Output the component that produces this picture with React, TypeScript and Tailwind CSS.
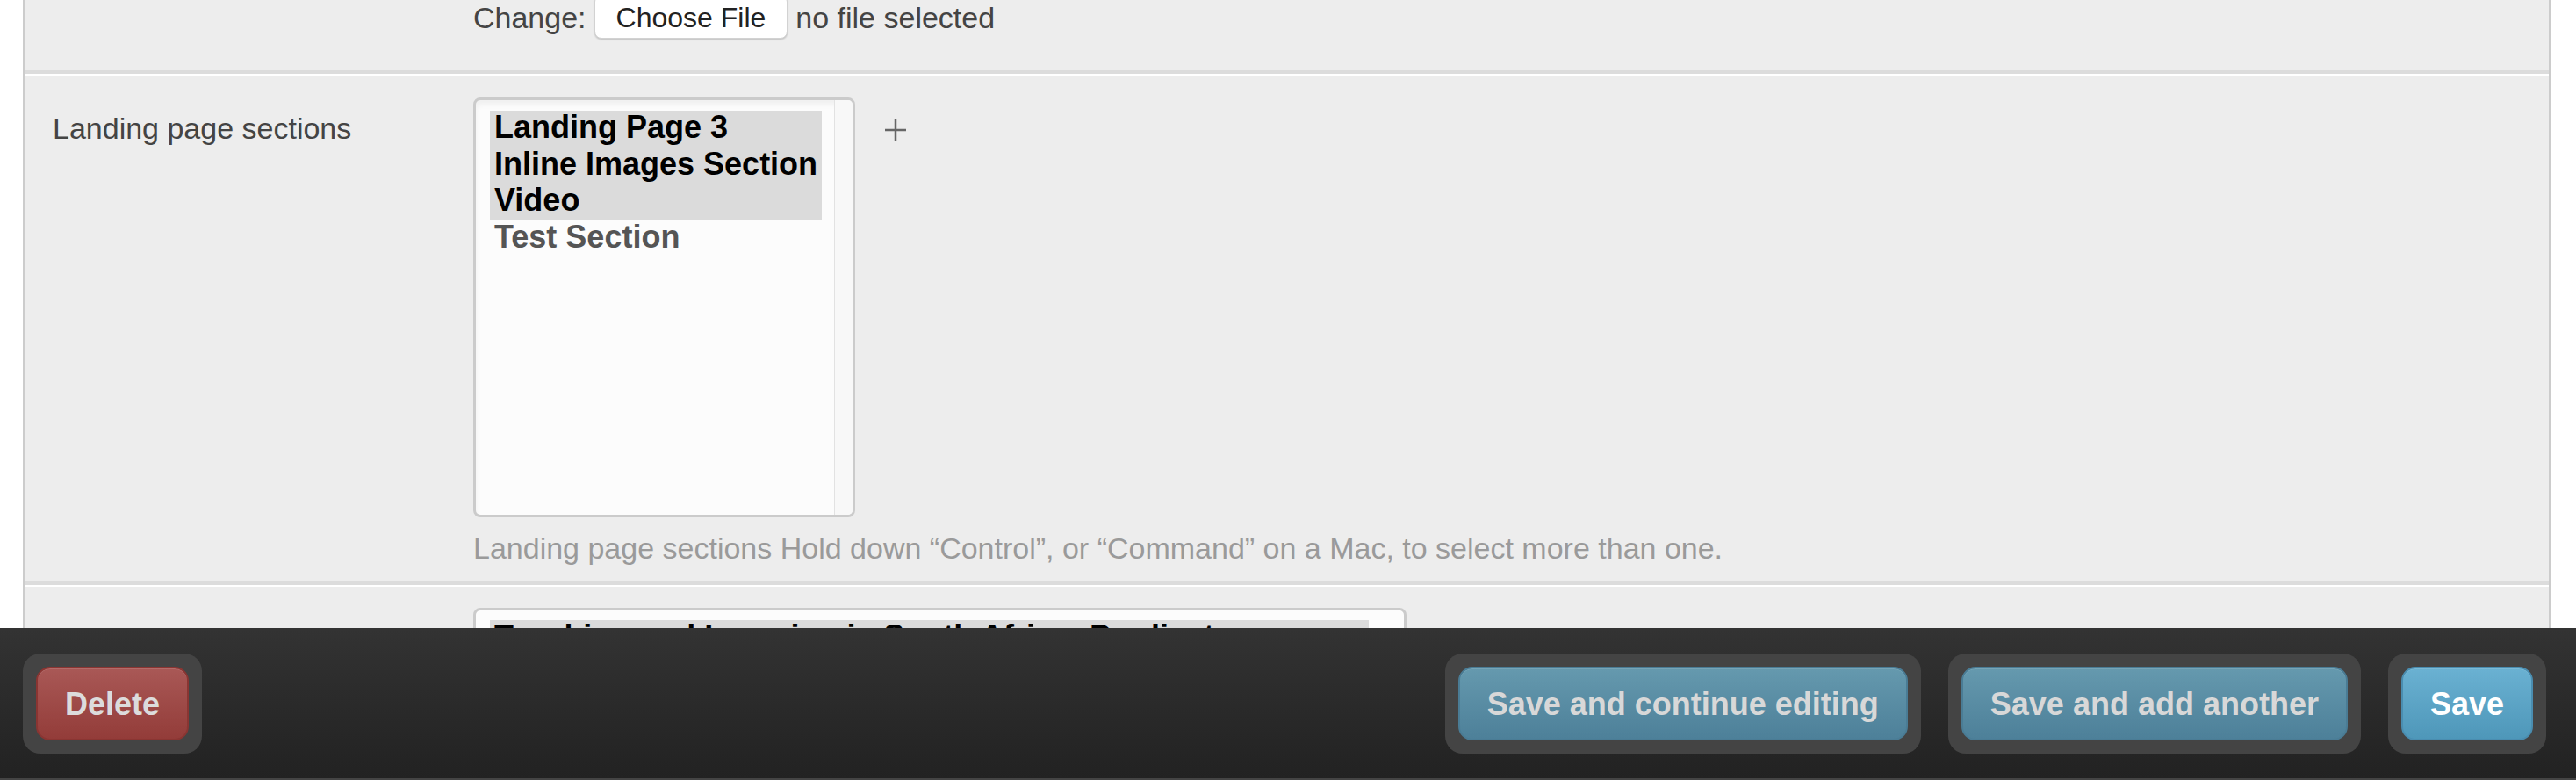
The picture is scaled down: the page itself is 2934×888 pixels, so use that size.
import { useState } from "react";

const sections = [
    { label: "Landing Page 3", selected: true },
    { label: "Inline Images Section", selected: true },
    { label: "Video", selected: true },
    { label: "Test Section", selected: false },
];

function FooterButton({
    label,
    variant,
}: {
    label: string;
    variant: "danger" | "muted" | "primary";
}) {
    const styles = {
        danger: "from-[#a95856] to-[#933c39] border-[#8a3532] text-[#dcdcdc]",
        muted: "from-[#6599ae] to-[#4d8099] border-[#4a7c95] text-[#d8d8d8]",
        primary: "from-[#6ab1d2] to-[#4e97b9] border-[#4a8db0] text-white",
    };

    return (
        <div className="rounded-[20px] bg-[#444444] p-[15px]">
            <button
                className={`flex h-[84px] items-center rounded-[16px] border-2 bg-gradient-to-b px-[31px] pt-[3px] text-[36px] leading-none font-bold shadow-[inset_0_1px_0_rgba(255,255,255,0.12)] ${styles[variant]}`}
            >
                {label}
            </button>
        </div>
    );
}

export default function App() {
    const [items] = useState(sections);

    return (
        <div className="flex h-[888px] w-full flex-col overflow-hidden bg-white font-['Liberation_Sans',Arial,sans-serif]">
            <main className="h-[715px] shrink-0 overflow-hidden pr-[28px] pl-[26px]">
                <div className="h-full border-x-[3px] border-[#cccccc] bg-[#ededed]">
                    {/* File row (scrolled, only the bottom is visible) */}
                    <div className="flex h-[84px] items-end border-b-4 border-[#dcdcdc] pl-[510px]">
                        <div className="flex items-center gap-[9px] pb-[36px] text-[34px] leading-[1.15] text-[#444444]">
                            <span className="pt-[3px]">Change:</span>
                            <span className="flex h-[50px] items-center rounded-[8px] border border-[#d2d2d2] bg-white px-[24px] pt-[3px] text-[32px] text-[#222222] shadow-[0_1px_2px_rgba(0,0,0,0.2)]">
                                Choose File
                            </span>
                            <span className="pt-[3px]">no file selected</span>
                        </div>
                    </div>

                    {/* Landing page sections */}
                    <div className="grid grid-cols-[510px_1fr] border-t-2 border-b-4 border-t-white border-b-[#dcdcdc]">
                        <div className="pt-[41px] pl-[31px] text-[34px] leading-[39px] text-[#444444]">
                            Landing page sections
                        </div>
                        <div className="pt-[25px] pb-[18px]">
                            <div className="flex items-start gap-[32px]">
                                <div className="flex h-[478px] w-[435px] overflow-hidden rounded-[8px] border-[3px] border-[#cbcbcb] bg-[#fcfcfc] shadow-[inset_0_5px_6px_rgba(0,0,0,0.05)]">
                                    <div className="flex-1 pt-[12px] pr-[14px] pl-[16px]">
                                        {items.map((item) => (
                                            <div
                                                key={item.label}
                                                className={`h-[41.7px] px-[5px] text-[36px] leading-[37px] font-bold whitespace-nowrap ${
                                                    item.selected
                                                        ? "bg-[#dbdbdb] text-black"
                                                        : "text-[#555555]"
                                                }`}
                                            >
                                                {item.label}
                                            </div>
                                        ))}
                                    </div>
                                    <div className="w-[21px] border-l border-[#e2e2e2] bg-[#f8f8f8]" />
                                </div>
                                <svg
                                    className="mt-[23px]"
                                    width="28"
                                    height="28"
                                    viewBox="0 0 28 28"
                                    fill="none"
                                    stroke="#666666"
                                    strokeWidth="2.5"
                                >
                                    <path d="M14 2v24M2 14h24" />
                                </svg>
                            </div>
                            <p className="mt-[16px] text-[34px] leading-[39px] whitespace-nowrap text-[#9a9a9a]">
                                Landing page sections Hold down “Control”, or
                                “Command” on a Mac, to select more than one.
                            </p>
                        </div>
                    </div>

                    {/* Next row, hidden behind the footer */}
                    <div className="grid grid-cols-[510px_1fr] border-t-2 border-white">
                        <div />
                        <div className="pt-[24px]">
                            <div className="h-[300px] w-[1063px] overflow-hidden rounded-[8px] border-[3px] border-[#cbcbcb] bg-[#fcfcfc] pt-[11px] pr-[40px] pl-[16px]">
                                <div className="h-[41.7px] bg-[#dbdbdb] px-[5px] text-[36px] leading-[37px] font-bold whitespace-nowrap text-black">
                                    Teaching and Learning in South Africa: Duplicate
                                </div>
                            </div>
                        </div>
                    </div>
                </div>
            </main>

            {/* Submit row */}
            <footer className="flex h-[173px] shrink-0 items-center justify-between border-b-2 border-[#444444] bg-gradient-to-b from-[#333333] to-[#222222] pr-[34px] pl-[26px]">
                <FooterButton label="Delete" variant="danger" />
                <div className="flex items-center gap-[31px]">
                    <FooterButton label="Save and continue editing" variant="muted" />
                    <FooterButton label="Save and add another" variant="muted" />
                    <FooterButton label="Save" variant="primary" />
                </div>
            </footer>
        </div>
    );
}
